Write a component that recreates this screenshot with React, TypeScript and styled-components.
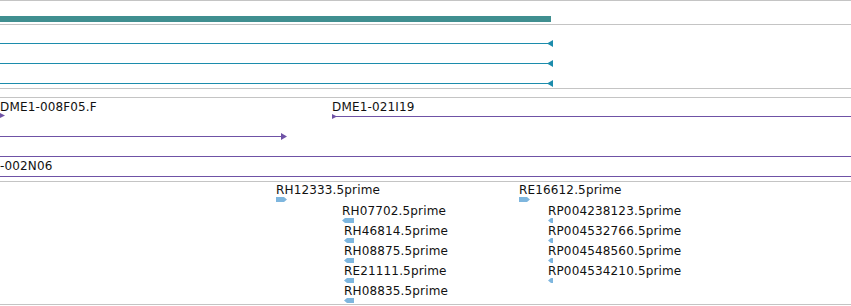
import styled, { createGlobalStyle } from "styled-components";

const GlobalStyle = createGlobalStyle`
  html, body {
    margin: 0;
    padding: 0;
    background: #fff;
  }
  body {
    font-family: "DejaVu Sans", sans-serif;
  }
`;

const Page = styled.div`
  width: 851px;
  height: 306px;
  overflow: hidden;
  background: #fff;
`;

const TrackGroup = styled.div`
  margin-bottom: 8px;
  border-bottom: 1px solid #c4c4c4;
`;

const Track = styled.div<{ $h: number }>`
  position: relative;
  height: ${(p) => p.$h}px;
  border-top: 1px solid #c4c4c4;
  overflow: hidden;
`;

type Pos = { $x: number; $y: number };

const Label = styled.div.attrs<Pos>((p) => ({
  style: { left: p.$x, top: p.$y },
}))<Pos>`
  position: absolute;
  font-size: 12px;
  line-height: 12px;
  letter-spacing: 0.15px;
  color: #111;
  white-space: nowrap;
`;

const Bar = styled.div.attrs<Pos & { $w: number }>((p) => ({
  style: { left: p.$x, top: p.$y, width: p.$w },
}))<Pos & { $w: number; $h: number; $color: string }>`
  position: absolute;
  height: ${(p) => p.$h}px;
  background: ${(p) => p.$color};
`;

const Head = styled.svg.attrs<Pos>((p) => ({
  style: { left: p.$x, top: p.$y },
}))<Pos>`
  position: absolute;
  display: block;
  overflow: visible;
`;

const TEAL = "#408f90";
const BLUE = "#1c8cac";
const PURPLE = "#6f52a6";
const LIGHT = "#7eb6de";

type Dir = "left" | "right";

const Arrow = ({ x, y, w, h, dir, color }: { x: number; y: number; w: number; h: number; dir: Dir; color: string }) => {
  const pts =
    dir === "right"
      ? `0,0 ${w},${h / 2} 0,${h}`
      : `${w},0 0,${h / 2} ${w},${h}`;
  return (
    <Head $x={x} $y={y} width={w} height={h}>
      <polygon points={pts} fill={color} />
    </Head>
  );
};

// arrow-shaped read glyph (block with a pointed end)
const Read = ({ x, y, w, dir }: { x: number; y: number; w: number; dir: Dir }) => {
  const h = 5;
  const t = Math.min(3, w - 1);
  const pts =
    dir === "right"
      ? `0,0 ${w - t},0 ${w},${h / 2} ${w - t},${h} 0,${h}`
      : `${t},0 ${w},0 ${w},${h} ${t},${h} 0,${h / 2}`;
  return (
    <Head $x={x} $y={y} width={w} height={h}>
      <polygon points={pts} fill={LIGHT} />
    </Head>
  );
};

const cdnaLines = [18, 38, 58];

const reads = [
  { name: "RH12333.5prime", x: 276, y: 2, gw: 11, dir: "right" as Dir },
  { name: "RH07702.5prime", x: 342, y: 23, gw: 12, dir: "left" as Dir },
  { name: "RH46814.5prime", x: 344, y: 43, gw: 10, dir: "left" as Dir },
  { name: "RH08875.5prime", x: 344, y: 63, gw: 10, dir: "left" as Dir },
  { name: "RE21111.5prime", x: 344, y: 83, gw: 10, dir: "left" as Dir },
  { name: "RH08835.5prime", x: 344, y: 103, gw: 10, dir: "left" as Dir },
  { name: "RE16612.5prime", x: 519, y: 2, gw: 11, dir: "right" as Dir },
  { name: "RP004238123.5prime", x: 548, y: 23, gw: 5, dir: "left" as Dir },
  { name: "RP004532766.5prime", x: 548, y: 43, gw: 5, dir: "left" as Dir },
  { name: "RP004548560.5prime", x: 548, y: 63, gw: 5, dir: "left" as Dir },
  { name: "RP004534210.5prime", x: 548, y: 83, gw: 5, dir: "left" as Dir },
];

export default function App() {
  return (
    <Page>
      <GlobalStyle />
      <TrackGroup>
        <Track $h={23}>
          <Bar $x={0} $y={15} $w={551} $h={6} $color={TEAL} />
        </Track>
        <Track $h={63}>
          {cdnaLines.map((y) => (
            <div key={y}>
              <Bar $x={0} $y={y} $w={549} $h={1} $color={BLUE} />
              <Arrow x={547} y={y - 3} w={6} h={7} dir="left" color={BLUE} />
            </div>
          ))}
        </Track>
      </TrackGroup>
      <TrackGroup>
        <Track $h={83}>
          <Label $x={0} $y={3}>DME1-008F05.F</Label>
          <Arrow x={0} y={15} w={5} h={5} dir="right" color={PURPLE} />
          <Label $x={332} $y={3}>DME1-021I19</Label>
          <Bar $x={332} $y={18} $w={519} $h={1} $color={PURPLE} />
          <Arrow x={332} y={16} w={5} h={5} dir="right" color={PURPLE} />
          <Bar $x={0} $y={38} $w={283} $h={1} $color={PURPLE} />
          <Arrow x={281} y={35} w={6} h={7} dir="right" color={PURPLE} />
          <Bar $x={0} $y={58} $w={851} $h={1} $color={PURPLE} />
          <Label $x={0} $y={62}>-002N06</Label>
          <Bar $x={0} $y={78} $w={851} $h={1} $color={PURPLE} />
        </Track>
        <Track $h={122}>
          {reads.map((r) => (
            <div key={r.name}>
              <Label $x={r.x} $y={r.y}>{r.name}</Label>
              <Read x={r.x} y={r.y + 13} w={r.gw} dir={r.dir} />
            </div>
          ))}
        </Track>
      </TrackGroup>
    </Page>
  );
}
